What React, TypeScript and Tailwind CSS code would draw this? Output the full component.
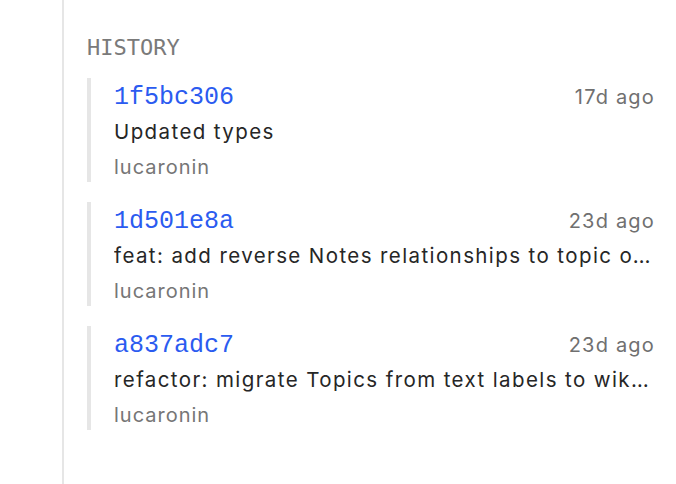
import React from "react";

const commits = [
  { hash: "1f5bc306", when: "17d ago", msg: "Updated types", author: "lucaronin" },
  { hash: "1d501e8a", when: "23d ago", msg: "feat: add reverse Notes relationships to topic overview pages and related notes", author: "lucaronin" },
  { hash: "a837adc7", when: "23d ago", msg: "refactor: migrate Topics from text labels to wikilinks across the vault", author: "lucaronin" },
];

export default function App() {
  return (
    <div className="w-[676px] h-[484px] bg-white flex overflow-hidden" style={{ fontFamily: "Inter, 'Noto Sans', sans-serif" }}>
      <div className="w-[62px] shrink-0" />
      <div className="w-[2px] shrink-0 bg-[#e6e6e6]" />
      <div className="flex-1 min-w-0 pl-[23px] pr-[22px] pt-[33px]">
        <div className="text-[22px] leading-[30px] text-[#7a7a7a]" style={{ fontFamily: "'DejaVu Sans Mono', monospace" }}>
          HISTORY
        </div>
        <div className="mt-[15px] flex flex-col gap-[20px]">
          {commits.map((c) => (
            <div key={c.hash} className="flex border-l-4 border-[#e6e6e6] pl-[23px]">
              <div className="flex-1 min-w-0">
                <div className="flex items-center justify-between h-[35px] pt-[4px]">
                  <span className="text-[25px] leading-[30px] text-[#2b5bf0]" style={{ fontFamily: "'Liberation Mono', monospace" }}>{c.hash}</span>
                  <span className="text-[20px] leading-[30px] tracking-[1.2px] text-[#707070] -mt-[2px] -mr-[1px]">{c.when}</span>
                </div>
                <div className="h-[35px] pt-[1px] leading-[35px] text-[20.5px] tracking-[1.4px] text-[#262626] truncate">{c.msg}</div>
                <div className="h-[34px] pt-[2px] leading-[34px] text-[20px] tracking-[1px] text-[#767676]">{c.author}</div>
              </div>
            </div>
          ))}
        </div>
      </div>
    </div>
  );
}
